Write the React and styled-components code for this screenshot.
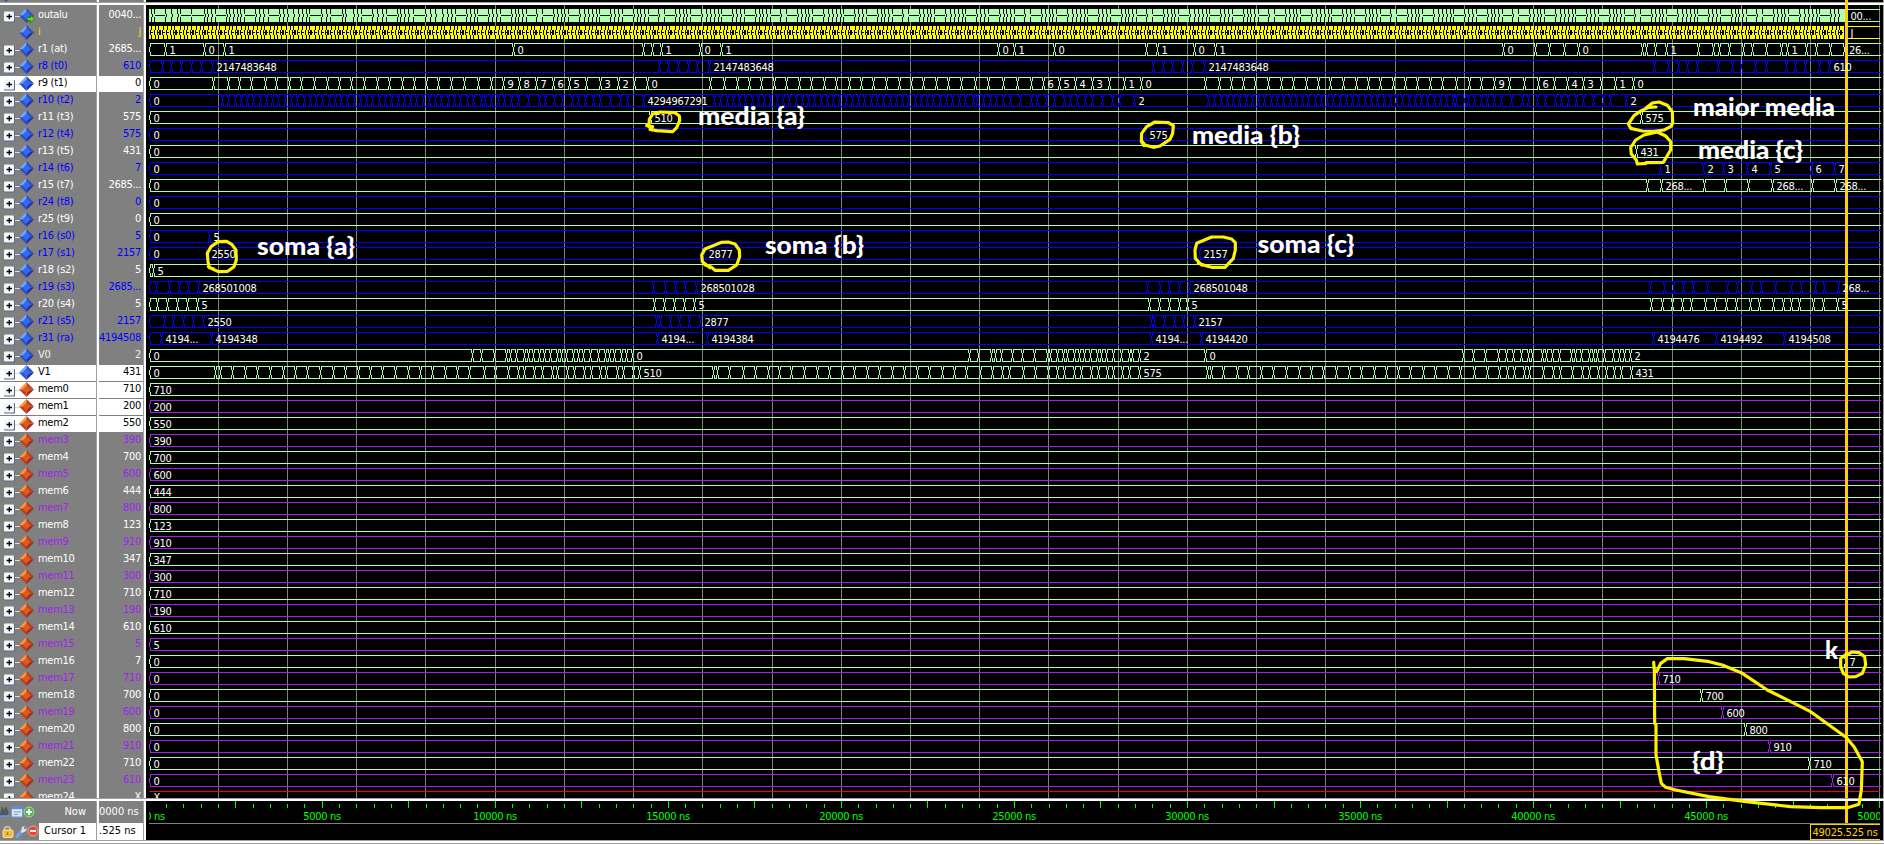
import React from "react";
import styled, { createGlobalStyle } from "styled-components";

const GREEN = "#b0ffb0";
const BLUE = "#0000ff";
const PURPLE = "#a020f0";
const YELLOW = "#ffff00";
const GOLD = "#ffcf00";

const GlobalStyle = createGlobalStyle`
  body { margin: 0; background: #808080; overflow: hidden; }
  * { box-sizing: border-box; }
`;

const Window = styled.div`
  position: relative;
  width: 1884px;
  height: 845px;
  display: flex;
  flex-direction: column;
  overflow: hidden;
  background: #808080;
  font-family: "DejaVu Sans Condensed", "DejaVu Sans", sans-serif;
  font-stretch: condensed;
  font-size: 11px;
  letter-spacing: -0.3px;
`;

const Band = styled.div`
  display: flex;
  height: ${(p) => p.$height}px;
  flex: none;
`;

const Sash = styled.div`
  flex: none;
  height: ${(p) => p.$height}px;
  border-top: 1px solid #a0a0a0;
  background: #fff;
`;

const NameColumn = styled.div`
  width: 96px;
  flex: none;
  overflow: hidden;
  background: #808080;
  padding-top: ${(p) => p.$top || 0}px;
`;

const ValueColumn = styled(NameColumn)`
  width: 44px;
`;

const Divider = styled.div`
  width: 3px;
  flex: none;
  border-left: 1px solid #a0a0a0;
  background: #fff;
`;

const Canvas = styled.div`
  flex: 1;
  background: #000;
  border-right: 1px solid #a0a0a0;
  overflow: hidden;
  svg { display: block; }
`;

const NameRow = styled.div`
  height: 17px;
  display: flex;
  align-items: center;
  border-bottom: 1px solid #808080;
  background: ${(p) => (p.$selected ? "#fff" : "#808080")};
  color: ${(p) => p.$color};
  white-space: pre;
  line-height: 14px;
  padding-left: 4px;
  svg { flex: none; margin-right: 3px; }
  span { margin-top: -2px; }
`;

const ValueRow = styled(NameRow)`
  justify-content: flex-end;
  padding: 0 2px 0 0;
`;

const FooterCell = styled.div`
  display: flex;
  align-items: center;
  justify-content: flex-end;
  height: ${(p) => p.$height}px;
  color: ${(p) => (p.$light ? "#000" : "#fff")};
  background: ${(p) => (p.$light ? "#fff" : "#808080")};
  padding: 0 10px 2px 0;
  white-space: pre;
  letter-spacing: 0;
  flex: 1;
`;

const FooterLine = styled.div`
  display: flex;
  svg { flex: none; }
`;

const Overlay = styled.svg`
  position: absolute;
  left: 0;
  top: 0;
  pointer-events: none;
`;

// A signal: [name, value, text colour, wave colour, transitions, selected]
// Transitions read "x" or "x:label", separated by blanks.
const loopTail = [473, 481, 485, 491, 498, 504, 511, 518, 528, 539, 545, 554, 562, 572, 578, 585, 593, 600, 610, 620, 627];
const dense = (start, shift) => {
  const out = [];
  for (let x = start; x < loopTail[0] + shift - 3; x += 6.27) out.push(Math.round(x));
  return out.concat(loopTail.map((v) => v + shift)).join(" ");
};
const zero = "150:0";

const SIGNALS = [
  ["outalu", "0040...", "#fff", GREEN, ""],
  ["i", "J", "#ffd700", YELLOW, ""],
  ["r1 (at)", "2685...", "#fff", GREEN, "150 165:1 204:0 224:1 513:0 643 652 661:1 700:0 721:1 998:0 1014:1 1054:0 1146 1157:1 1194:0 1215:1 1503:0 1535 1549 1564 1578:0 1642 1646 1655 1666:1 1698 1713 1719 1729 1743 1752 1766 1781 1787:1 1806 1816 1830 1844:26..."],
  ["r8 (t0)", "610", BLUE, BLUE, "150 162 171 181 191 201 212:2147483648 659 668 678 688 697 709:2147483648 1153 1163 1172 1182 1192 1204:2147483648 1654 1668 1678 1687 1697 1718 1732 1741 1755 1766 1786 1795 1805 1819 1829:610"],
  ["r9 (t1)", "0", "#000", GREEN, "150:0 213 228 239 251 265 276 289 301 314 327 339 351 364 377 389 402 414 426 438 451 464 478 491 503:9 519:8 536:7 553:6 569:5 586 600:3 618:2 634 647:0 710 724 737 749 761 774 786 799 811 824 836 849 861 873 886 899 911 923 936 948 961 975 988 1003 1017 1031 1043:6 1059:5 1075:4 1092:3 1109 1124:1 1141:0 1205 1219 1231 1243 1255 1268 1281 1293 1306 1318 1330 1343 1356 1368 1380 1393 1405 1417 1430 1442 1456 1469 1481 1494:9 1509 1524 1538:6 1554 1567:4 1583:3 1601 1615:1 1633:0", true],
  ["r10 (t2)", "2", BLUE, BLUE, `150:0 ${dense(222, 0)} 643:4294967291 ${dense(714, 492)} 1134:2 ${dense(1208, 983)} 1626:2`],
  ["r11 (t3)", "575", "#fff", GREEN, "150:0 650:510 1641:575"],
  ["r12 (t4)", "575", BLUE, BLUE, "150:0 1145:575"],
  ["r13 (t5)", "431", "#fff", GREEN, "150:0 1636:431"],
  ["r14 (t6)", "7", BLUE, BLUE, "150:0 1660:1 1703:2 1723:3 1747:4 1770:5 1811:6 1834:7"],
  ["r15 (t7)", "2685...", "#fff", GREEN, "150:0 1647 1661:268... 1704 1725 1748 1772:268... 1812 1835:268..."],
  ["r24 (t8)", "0", BLUE, BLUE, zero],
  ["r25 (t9)", "0", "#fff", GREEN, zero],
  ["r16 (s0)", "5", BLUE, BLUE, "150:0 209:5"],
  ["r17 (s1)", "2157", BLUE, BLUE, "150:0 207:2550 704:2877 1199:2157"],
  ["r18 (s2)", "5", "#fff", GREEN, "150 153:5"],
  ["r19 (s3)", "2685...", BLUE, BLUE, "150 156 169 179 188 198:268501008 653 665 675 685 696:268501028 1147 1160 1169 1179 1189:268501048 1650 1664 1673 1683 1693 1707 1727 1737 1751 1761 1775 1791 1801 1815 1824 1838:268..."],
  ["r20 (s4)", "5", "#fff", GREEN, "150 157 167 177 187 197:5 654 664 674 684 694:5 1149 1159 1169 1179 1187:5 1651 1662 1672 1682 1691 1705 1715 1726 1736 1750 1759 1773 1783 1791 1799 1813 1823 1837:5"],
  ["r21 (s5)", "2157", BLUE, BLUE, "150 164 173 183 193 203:2550 656 660 670 679 689 700:2877 1151 1154 1164 1174 1183 1194:2157"],
  ["r31 (ra)", "4194508", BLUE, BLUE, "150 161:4194... 211:4194348 657:4194... 707:4194384 1151:4194... 1201:4194420 1653:4194476 1716:4194492 1784:4194508"],
  ["V0", "2", "#eee", GREEN, "150:0 472 481 494 506 510 516 524 528 533 539 544 550 557 561 566 573 578 583 590 598 605 609 614 621 626 632:0 969 978 991 995 1001 1012 1022 1034 1047 1050 1057 1063 1067 1074 1079 1084 1090 1097 1101 1106 1113 1121 1129 1132 1139:2 1205:0 1463 1473 1485 1498 1506 1513 1521 1528 1532 1542 1546 1552 1559 1571 1575 1581 1589 1593 1597 1604 1613 1619 1624 1630:2"],
  ["V1", "431", "#000", GREEN, "150:0 215 220 232 245 257 270 283 295 307 320 333 345 358 370 382 395 408 420 432 445 457 469 484 495 508 518 524 534 542 552 557 567 574 584 591 600 606 617 623 633 639:510 713 717 729 743 755 768 779 791 804 817 829 842 854 867 879 892 904 917 929 942 954 966 980 992 1002 1009 1023 1035 1048 1057 1064 1074 1081 1091 1098 1107 1113 1122 1129 1139:575 1207 1211 1223 1237 1248 1261 1273 1286 1299 1311 1323 1336 1349 1361 1374 1386 1398 1410 1423 1435 1448 1460 1474 1487 1499 1507 1514 1524 1529 1543 1553 1560 1572 1582 1589 1598 1606 1614 1621 1631:431", true],
];

const MEM_INITIAL = ["710", "200", "550", "390", "700", "600", "444", "800", "123", "910", "347", "300", "710", "190", "610", "5"];
const MEM_WRITES = [[1845, "7"], [1658, "710"], [1701, "700"], [1722, "600"], [1745, "800"], [1769, "910"], [1809, "710"], [1832, "610"]];

for (let n = 0; n < 24; n++) {
  const odd = n % 2 === 1;
  const write = n >= 16 ? MEM_WRITES[n - 16] : null;
  const selected = n < 3;
  SIGNALS.push([
    `mem${n}`,
    write ? write[1] : MEM_INITIAL[n],
    selected ? "#000" : odd ? PURPLE : "#fff",
    odd ? PURPLE : GREEN,
    write ? `150:0 ${write[0]}:${write[1]}` : `150:${MEM_INITIAL[n]}`,
    selected,
  ]);
}
SIGNALS.push(["mem24", "X", "#fff", "#ff0000", ""]);

const rowTop = (n) => 9 + 17 * n;

function SignalIcon({ kind, leaf, port }) {
  const c = kind === "mem"
    ? ["#ff9a3c", "#b8431c", "#e05a20", "#98302a"]
    : ["#74a4ff", "#3450b8", "#2f6df6", "#2c30a0"];
  return (
    <svg width="31" height="16" viewBox="4 0 31 16">
      {!leaf && (
        <g>
          <path d="M14 8.5H20" stroke="#ddd" />
          <rect x="4" y="4" width="11" height="10.5" rx="1" fill="#5a6890" />
          <rect x="4" y="3.5" width="10" height="10" rx="1" fill="#f4f6fa" />
          <path d="M6.5 8.5H12M9.3 6V11.2" stroke="#000" strokeWidth="1.3" />
        </g>
      )}
      <path d="M26.5 0L19 7.5H26.5Z" fill={c[0]} />
      <path d="M26.5 0L34 7.5H26.5Z" fill={c[1]} />
      <path d="M19 7.5L26.5 15V7.5Z" fill={c[1]} />
      <path d="M34 7.5L26.5 15V7.5Z" fill={c[3]} />
      <path d="M26.5 3.4L30.6 7.5L26.5 11.6L22.4 7.5Z" fill={c[2]} />
      {port && <path d="M27 9.5H30.5V7L34.5 11L30.5 15V12.5H27Z" fill="#5edc10" stroke="#267008" strokeWidth=".7" />}
    </svg>
  );
}

function parse(text) {
  return text.split(" ").map((item) => {
    const [x, label] = item.split(":");
    return { x: Number(x), label };
  });
}

function Wave({ row, color, text }) {
  const y = rowTop(row);
  const items = parse(text);
  let d = "";
  items.forEach((item, i) => {
    const next = items[i + 1] ? items[i + 1].x : 1881;
    const from = i === 0 ? item.x : item.x + 1;
    d += `M${from} ${y + 0.5}H${next}M${from} ${y + 12.5}H${next}`;
    if (i === 0) {
      d += `M150.5 ${y}V${y + 4}M149.5 ${y + 4}V${y + 9}M150.5 ${y + 9}V${y + 13}`;
    } else {
      const x = item.x + 0.5;
      d += `M${x - 1} ${y}V${y + 4}M${x + 1} ${y}V${y + 4}M${x} ${y + 4}V${y + 9}M${x - 1} ${y + 9}V${y + 13}M${x + 1} ${y + 9}V${y + 13}`;
    }
  });
  return <path d={d} stroke={color} fill="none" />;
}

const ALU_START = [151, 154, 165, 171, 177, 180, 191, 204, 207, 211, 215, 226, 229, 233, 237, 240, 244, 255, 259, 263, 268, 279, 283, 287, 293, 298, 302, 306, 309, 321, 326, 330, 342, 345, 353, 357, 361, 372, 377, 382, 386, 397, 400, 404, 408, 413, 425, 430, 435, 442, 447, 451, 455];
const ALU_STEPS = [4, 4, 3, 11, 4, 4, 4, 11, 4, 3, 4, 4, 10, 6, 11, 4, 4, 3, 4, 11, 5, 4];

function DenseAlu() {
  const ticks = [...ALU_START];
  for (let i = 0, x = 466; x < 1842; i++) {
    ticks.push(x);
    x += ALU_STEPS[i % ALU_STEPS.length];
  }
  let d = "";
  ticks.forEach((x, i) => {
    d += `M${x + 0.5} 9V14M${x + 0.5} 17V22`;
    const next = ticks[i + 1] || 1845;
    if (next - x > 8) d += `M${x + 1} 15.5H${next}`;
    else d += `M${x + 1.5} 14V17`;
  });
  return (
    <g>
      <rect x="149" y="9" width="1696" height="13" fill={GREEN} />
      <path d={d} stroke="#000" />
      <path d="M1847 9.5H1880M1847 21.5H1880" stroke={GREEN} />
    </g>
  );
}

function DenseInstructions() {
  const steps = [4, 3, 5, 4, 4, 3, 6, 4, 3, 4, 5];
  let d = "";
  for (let i = 0, x = 151; x < 1843; i++) {
    const step = steps[i % steps.length];
    d += `M${x + 0.5} 26V30M${x + 0.5} 35V39M${x - 0.5} 30V35`;
    if (step > 3) d += `M${x} 32.5H${x + step - 2}`;
    if (step > 4) d += `M${x + 1.5} 30V35M${x + 2.5} 30V35`;
    x += step;
  }
  return (
    <g>
      <rect x="149" y="26" width="1695" height="13" fill={YELLOW} />
      <path d={d} stroke="#000" />
      <path d="M1846 26.5H1880M1846 38.5H1880" stroke={YELLOW} />
    </g>
  );
}

const GRID = [218, 287, 356, 425, 495, 564, 633, 702, 772, 841, 910, 979, 1048, 1118, 1187, 1256, 1325, 1395, 1464, 1533, 1602, 1672, 1741, 1810, 1879];

const labelOffset = (x) => (x === 150 ? 3.5 : x === 1844 ? 5 : 4.5);

function WaveChart() {
  return (
    <svg width="1737" height="793" viewBox="146 5 1737 793" shapeRendering="crispEdges">
      <path d={GRID.map((x) => `M${x + 0.5} 5V798`).join("")} stroke="#808080" />
      <DenseAlu />
      <DenseInstructions />
      {SIGNALS.map(([name, , , color, text], n) => text && <Wave key={name} row={n} color={color} text={text} />)}
      <path d="M149 791.5H1880" stroke="#ff0000" />
      <rect x="1845" y="5" width="3" height="793" fill={GOLD} />
      <g fill="#fff">
        <text x="1850.5" y="20">00...</text>
        <text x="1850.5" y="37">J</text>
        <text x="153.5" y="801">X</text>
        {SIGNALS.map(([name, , , , text], n) =>
          text && parse(text).filter((t) => t.label).map((t) => (
            <text key={name + t.x} x={t.x + labelOffset(t.x)} y={rowTop(n) + 11}>{t.label}</text>
          ))
        )}
      </g>
    </svg>
  );
}

function Ruler() {
  const ticks = [];
  for (let k = 1; k <= 100; k++) ticks.push(`M${Math.round(148.7 + k * 17.305) + 0.5} ${k % 5 ? 804 : 801}V808`);
  return (
    <svg width="1737" height="39" viewBox="146 801 1737 39">
      <defs><clipPath id="ruler"><rect x="149" y="801" width="1731" height="39" /></clipPath></defs>
      <g clipPath="url(#ruler)">
        <path d={ticks.join("")} stroke="#00ff00" shapeRendering="crispEdges" />
        <g fill="#00ff00" textAnchor="middle">
          {Array.from({ length: 11 }, (_, k) => (
            <text key={k} x={k ? 149 + k * 173 : 155} y="820">{k ? `${k * 5000} ns` : "0 ns"}</text>
          ))}
        </g>
        <path d="M149 823.5H1880" stroke="#808080" shapeRendering="crispEdges" />
        <rect x="1845" y="801" width="3" height="22" fill={GOLD} />
        <path d="M1881 824.5H1810.5V839.5H1881" fill="#000" stroke={GOLD} shapeRendering="crispEdges" />
        <text x="1812.5" y="836" fill={GOLD} textLength="65">49025.525 ns</text>
      </g>
    </svg>
  );
}

function NowIcons() {
  return (
    <svg width="39" height="22" viewBox="0 801 39 22">
      <path d="M0 814L2 806L4 810L6 806L9 813L7 816H0Z" fill="#50585c" />
      <path d="M0 816H9" stroke="#5a9af0" strokeWidth="1.5" />
      <rect x="11.5" y="807" width="11" height="10" rx="1" fill="#d8e6fa" stroke="#6f9bd8" />
      <path d="M11 808H23" stroke="#5b8fdb" strokeWidth="2.4" />
      <path d="M14 812H21M14 814.5H18" stroke="#7d99c4" />
      <circle cx="29" cy="812" r="5" fill="#4db84d" stroke="#a3dca0" />
      <path d="M26 812H32M29 809V815" stroke="#fff" strokeWidth="2" />
    </svg>
  );
}

function CursorIcons() {
  return (
    <svg width="39" height="17" viewBox="0 823 39 17">
      <path d="M4.5 831V829C4.5 826 10 826 10 829V830" fill="none" stroke="#d8c8a0" strokeWidth="1.7" />
      <rect x="3" y="830" width="10" height="7.5" rx="1" fill="#f5b942" stroke="#ffe29a" />
      <path d="M7.5 832.5V835" stroke="#9b6a10" strokeWidth="1.5" />
      <path d="M17 836.5L22 831" stroke="#6f9fe6" strokeWidth="3.4" strokeLinecap="round" />
      <path d="M21 832L22 827L25 825.5L23.5 828.5L25 829.5L27 827L26 831L22 833Z" fill="#dfe6ee" />
      <circle cx="33" cy="831" r="5" fill="#e8483c" stroke="#f3a39c" />
      <path d="M30 831H36" stroke="#fff" strokeWidth="2" />
    </svg>
  );
}

// Hand-drawn marks, grouped by origin, in thirds of a pixel.
const MARKS = [
  [0, 200, "625,200 640,208 655,215 683,214 702,200 709,180 708,150 695,133 680,124 655,125 633,140 622,160 624,185 628,203 640,206"],
  [470, 0, "530,377 548,380 540,388 560,392 608,395 620,383 629,362 628,348 615,338 570,336 548,342 538,358 537,380"],
  [940, 0, "607,425 615,435 640,442 660,438 690,418 698,400 700,377 685,368 645,366 620,380 605,400 604,425 612,437"],
  [1404, 0, "756,321 735,322 712,332 690,347 673,372 680,385 715,393 750,394 780,390 800,380 806,370 805,335 790,316 765,306 745,309 725,325"],
  [1404, 0, "726,490 700,492 697,480 682,462 680,443 695,420 720,405 760,396 785,408 800,425 800,450 785,475 778,487 726,488"],
  [470, 200, "705,195 722,200 735,211 775,211 800,195 809,170 808,150 795,132 775,126 755,127 705,147 695,165 697,185 720,203"],
  [940, 200, "775,190 800,198 815,202 855,202 880,175 886,150 886,128 875,117 850,111 815,111 770,130 765,150 766,175 785,195"],
  [1604, 630, "725,75 745,66 765,68 782,80 785,105 775,130 755,140 735,141 718,130 710,110 710,85 728,72"],
  [1604, 630, "149,97 151,120 152,280 156,285 156,375 165,425 172,460 185,472 215,480 315,500 420,514 480,521 560,530 650,533 730,533 765,523 772,480 775,395 750,350 726,322 620,245 490,180 415,130 355,105 310,94 240,86 190,86 170,100 158,125"],
];

const NOTES = [
  [698, 125, 107, "media {a}"],
  [1192, 144, 108, "media {b}"],
  [1693, 116, 142, "maior media"],
  [1698, 158.5, 105, "media {c}"],
  [257, 255, 98, "soma {a}"],
  [765, 253.7, 99, "soma {b}"],
  [1257.5, 252.7, 97, "soma {c}"],
  [1825, 659, 13, "k"],
  [1692, 770, 32, "{d}"],
];

const NoteText = styled.text`
  font-family: Lato, sans-serif;
  font-weight: 900;
  font-size: 24px;
  letter-spacing: 0;
  fill: #fff;
`;

function Annotations() {
  return (
    <Overlay width="1884" height="845" viewBox="0 0 1884 845">
      {MARKS.map(([x, y, points]) => (
        <polyline key={points} points={points} transform={`translate(${x} ${y}) scale(0.33333)`} fill="none" stroke="#fff200" strokeWidth="9.5" strokeLinejoin="round" strokeLinecap="round" />
      ))}
      {NOTES.map(([x, y, w, text]) => (
        <NoteText key={text} x={x} y={y} textLength={w} lengthAdjust="spacingAndGlyphs">{text}</NoteText>
      ))}
      <rect x="1845" y="0" width="3" height="5" fill={GOLD} />
      <path d="M4 0H8L6 2Z" fill="#1c50d8" />
    </Overlay>
  );
}

export default function App() {
  return (
    <Window>
      <GlobalStyle />
      <Band $height={2}>
        <NameColumn />
        <Divider />
        <ValueColumn />
        <Divider />
        <Canvas />
      </Band>
      <Sash $height={3} />
      <Band $height={793}>
        <NameColumn $top={3}>
          {SIGNALS.map(([name, , color, , , selected]) => (
            <NameRow key={name} $color={color} $selected={selected}>
              <SignalIcon kind={name.startsWith("mem") ? "mem" : "reg"} leaf={name === "i"} port={name === "outalu"} />
              <span>{name}</span>
            </NameRow>
          ))}
        </NameColumn>
        <Divider />
        <ValueColumn $top={3}>
          {SIGNALS.map(([name, value, color, , , selected]) => (
            <ValueRow key={name} $color={color} $selected={selected}><span>{value}</span></ValueRow>
          ))}
        </ValueColumn>
        <Divider />
        <Canvas><WaveChart /></Canvas>
      </Band>
      <Sash $height={3} />
      <Band $height={39}>
        <NameColumn>
          <FooterLine><NowIcons /><FooterCell $height={22}>Now</FooterCell></FooterLine>
          <FooterLine><CursorIcons /><FooterCell $height={17} $light>Cursor 1</FooterCell></FooterLine>
        </NameColumn>
        <Divider />
        <ValueColumn>
          <FooterLine><FooterCell $height={22}>0000 ns</FooterCell></FooterLine>
          <FooterLine><FooterCell $height={17} $light>.525 ns</FooterCell></FooterLine>
        </ValueColumn>
        <Divider />
        <Canvas><Ruler /></Canvas>
      </Band>
      <Sash $height={3} />
      <Sash $height={2} />
      <Annotations />
    </Window>
  );
}
